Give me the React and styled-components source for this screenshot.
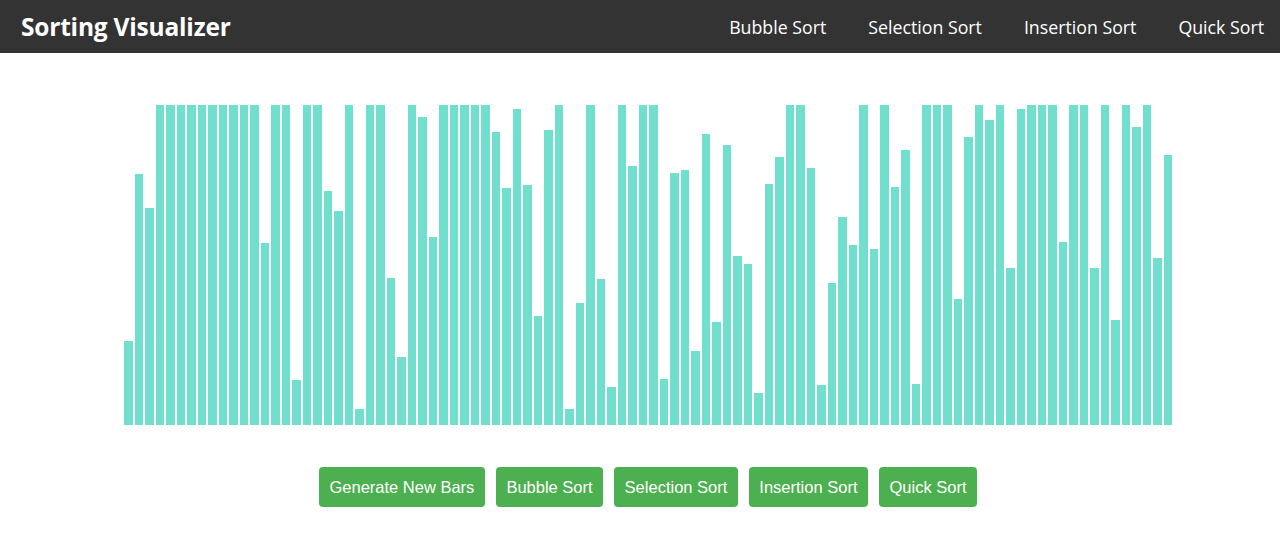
import React, { useState } from 'react';
import styled, { createGlobalStyle } from 'styled-components';

const GlobalStyle = createGlobalStyle`
    body {
        margin: 0;
        background: #fff;
        font-family: "Open Sans", "Noto Sans", sans-serif;
    }
`

const Nav = styled.nav`
    display: flex;
    align-items: center;
    justify-content: space-between;
    height: 53px;
    padding: 0 16px 0 21px;
    background: #333333;
    color: #fff;
`

const Title = styled.h1`
    margin: 0;
    font-size: 24.5px;
    font-weight: 700;
    letter-spacing: -0.2px;
`

const Links = styled.div`
    display: flex;
    gap: 42px;
`

const NavLink = styled.a`
    color: #fff;
    font-size: 17.75px;
    text-decoration: none;
    cursor: pointer;
`

const Main = styled.main`
    display: flex;
    flex-direction: column;
    align-items: center;
    padding: 52px 0 0 16px;
`

const BarBox = styled.div`
    display: flex;
    align-items: flex-end;
    width: 1050px;
    height: 320px;
`

const Bar = styled.div`
    flex: 1;
    margin: 0 1px;
    background: #70dfce;
`

const Buttons = styled.div`
    display: flex;
    gap: 10.5px;
    margin-top: 42px;
`

const Button = styled.button`
    height: 40px;
    padding: 0 10.75px;
    border: none;
    border-radius: 4px;
    background: #4caf50;
    color: #fff;
    font-family: "Liberation Sans", Arial, sans-serif;
    font-size: 16.5px;
    cursor: pointer;
`

const initial = [
    84, 251, 217, 320, 320, 320, 320, 320, 320, 320, 320, 320, 320, 182, 320, 320, 45, 320, 320, 234,
    214, 320, 16, 320, 320, 147, 68, 320, 308, 188, 320, 320, 320, 320, 320, 293, 237, 316, 240, 109,
    295, 320, 16, 122, 320, 146, 38, 320, 259, 320, 320, 46, 252, 255, 74, 291, 103, 280, 169, 161,
    32, 241, 268, 320, 320, 257, 40, 142, 208, 180, 320, 176, 320, 238, 275, 41, 320, 320, 320, 126,
    288, 320, 305, 320, 157, 316, 320, 320, 320, 183, 320, 320, 157, 320, 105, 320, 298, 320, 167, 270,
]

const sorts = ['Bubble Sort', 'Selection Sort', 'Insertion Sort', 'Quick Sort']

const App = () => {
    const [bars, setBars] = useState(initial);

    const generate = () => {
        setBars(Array.from({ length: 100 }, () => Math.min(320, Math.floor(Math.random() * 400) + 5)));
    }

    return (
        <>
            <GlobalStyle />
            <Nav>
                <Title>Sorting Visualizer</Title>
                <Links>
                    {sorts.map(s => <NavLink key={s}>{s}</NavLink>)}
                </Links>
            </Nav>
            <Main>
                <BarBox>
                    {bars.map((h, i) => <Bar key={i} style={{ height: h }} />)}
                </BarBox>
                <Buttons>
                    <Button onClick={generate}>Generate New Bars</Button>
                    {sorts.map(s => <Button key={s}>{s}</Button>)}
                </Buttons>
            </Main>
        </>
    )
}

export default App
